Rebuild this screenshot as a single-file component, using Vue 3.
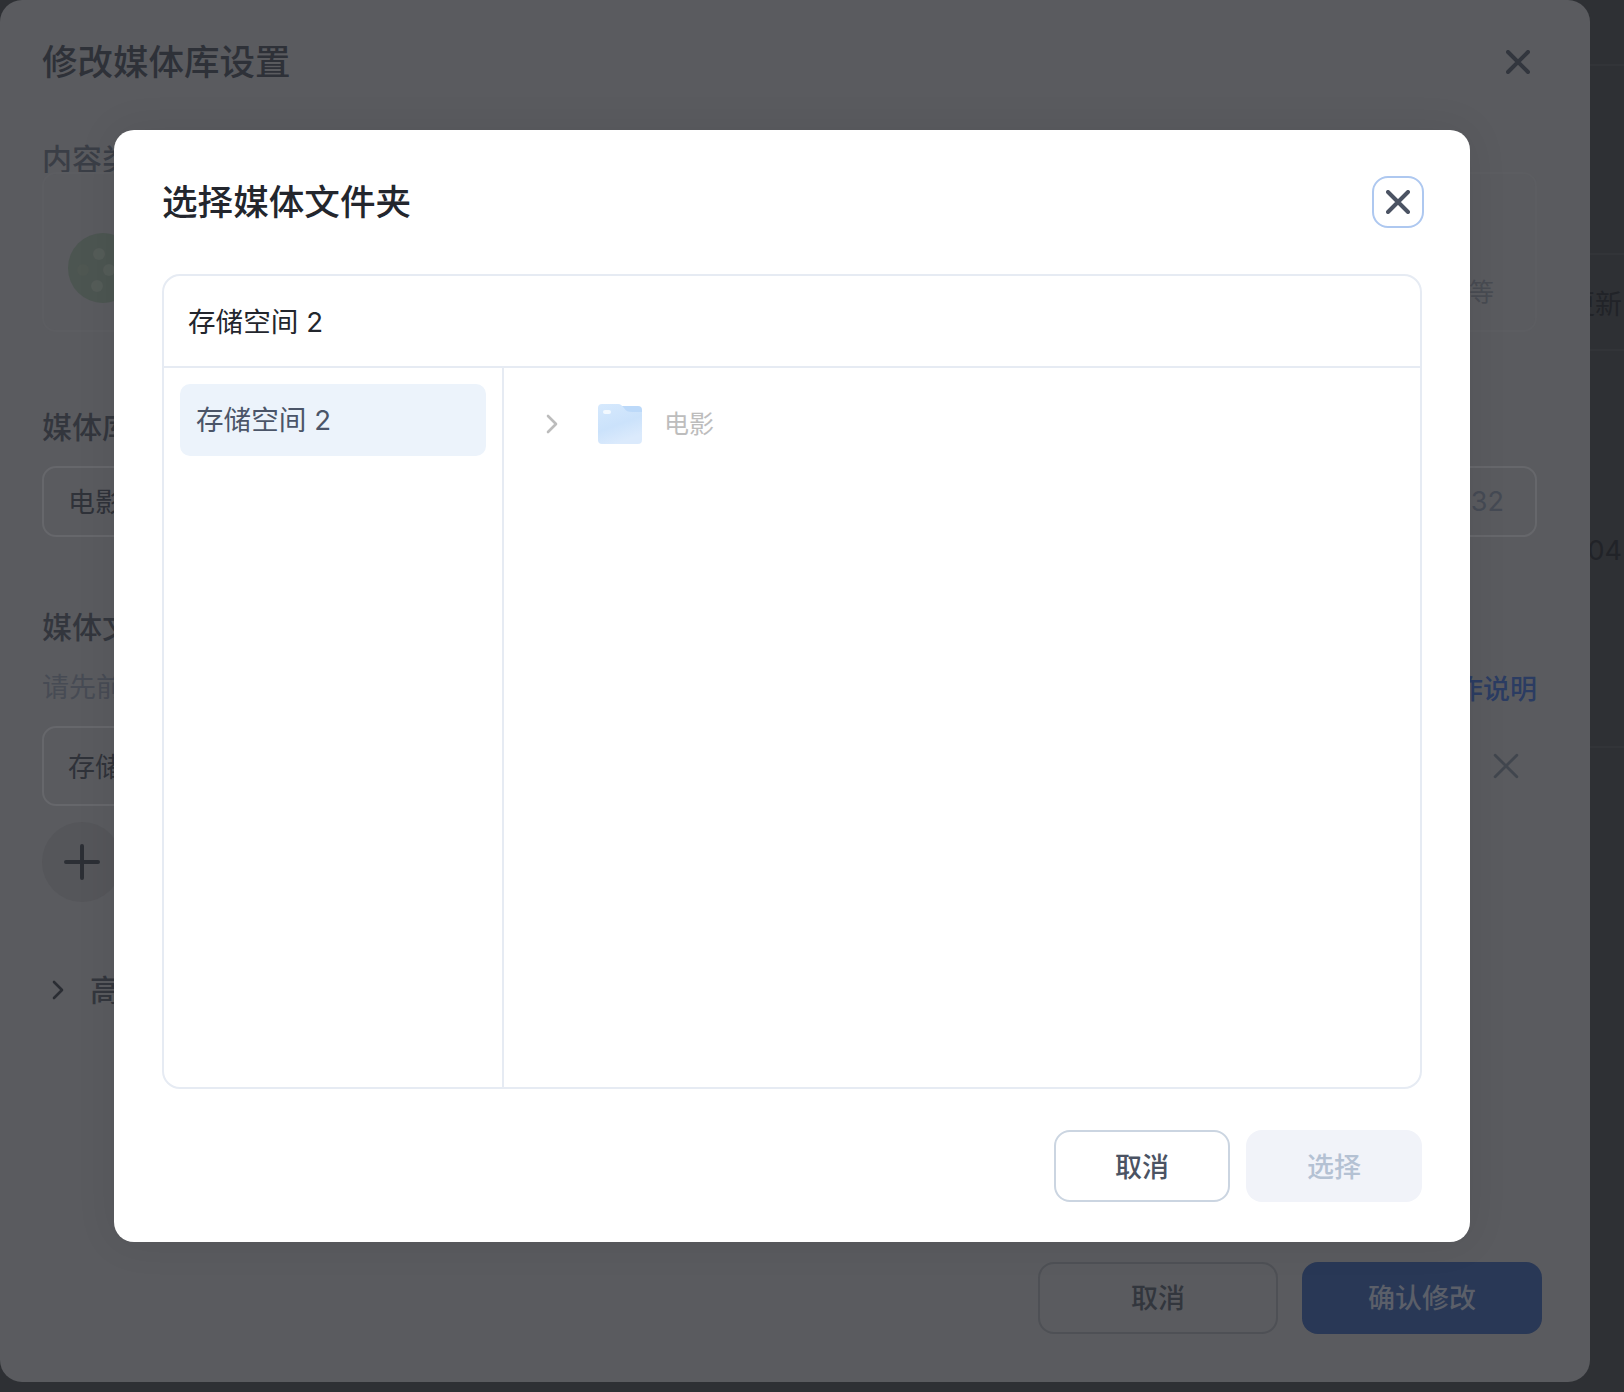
<script setup>
const rows = [
  { id: 'a', text: '', height: 66 },
  { id: 'b', text: '', height: 189 },
  { id: 'c', text: '更新', height: 96 },
  { id: 'd', text: '04', height: 397 }
]
</script>

<template>
  <div class="page">
    <section class="settings">
      <header class="settings-head">
        <h1>修改媒体库设置</h1>
        <svg class="x-icon" viewBox="0 0 24 24"><path d="M2 2 22 22M22 2 2 22" /></svg>
      </header>

      <h2 class="label first">内容类型</h2>
      <div class="types">
        <div class="type-card">
          <svg class="reel" viewBox="0 0 72 72">
            <circle cx="36" cy="36" r="35" fill="#4c5551" />
            <circle cx="32" cy="22" r="6" fill="#545c58" />
            <circle cx="42" cy="38" r="6" fill="#545c58" />
            <circle cx="30" cy="54" r="6" fill="#545c58" />
            <circle cx="16" cy="38" r="6" fill="#4f5752" />
          </svg>
        </div>
        <div class="type-card end"><span class="type-note">等</span></div>
      </div>

      <h2 class="label name-label">媒体库名称</h2>
      <div class="field name-field">
        <span class="nudge">电影</span>
        <span class="count">2 / 32</span>
      </div>

      <h2 class="label folder-label">媒体文件夹</h2>
      <div class="hint-row">
        <span class="hint">请先前往存储空间添加文件夹</span>
        <span class="link">操作说明</span>
      </div>
      <div class="folder-row">
        <div class="field folder-field"><span class="nudge">存储空间 2</span></div>
        <svg class="x-thin" viewBox="0 0 24 24"><path d="M2 2 22 22M22 2 2 22" /></svg>
      </div>
      <button class="add">
        <svg viewBox="0 0 36 36"><path d="M18 2V34M2 18H34" /></svg>
      </button>

      <div class="advanced">
        <svg viewBox="0 0 12 20"><path d="M2 2 10 10 2 18" /></svg>
        <span>高级设置</span>
      </div>

      <footer class="settings-foot">
        <button class="ghost">取消</button>
        <button class="primary">确认修改</button>
      </footer>
    </section>

    <aside class="side">
      <div v-for="row in rows" :key="row.id" class="side-row" :style="{ height: row.height + 'px' }">
        <span>{{ row.text }}</span>
      </div>
    </aside>

    <div class="modal">
      <header class="modal-head">
        <h2>选择媒体文件夹</h2>
        <button class="close">
          <svg viewBox="0 0 24 24"><path d="M2 2 22 22M22 2 2 22" /></svg>
        </button>
      </header>

      <div class="browser">
        <div class="browser-head">存储空间 2</div>
        <div class="browser-body">
          <nav class="drives">
            <div class="drive">存储空间 2</div>
          </nav>
          <div class="tree">
            <div class="tree-row">
              <svg class="chev" viewBox="0 0 12 20"><path d="M2 2 10 10 2 18" /></svg>
              <svg class="folder" viewBox="0 0 44 40">
                <defs>
                  <linearGradient id="fold" x1="0" y1="0" x2="0.4" y2="1">
                    <stop offset="0" stop-color="#d6e9fd" />
                    <stop offset="0.6" stop-color="#cbe2fb" />
                    <stop offset="1" stop-color="#dbeafc" />
                  </linearGradient>
                </defs>
                <path d="M4 2H40a4 4 0 0 1 4 4V20H0V6a4 4 0 0 1 4-4Z" fill="#bcd9f9" />
                <path d="M4 0H20C23 0 24 2 26 4 28 7 30 8 34 8H44V36a4 4 0 0 1-4 4H4a4 4 0 0 1-4-4V4a4 4 0 0 1 4-4Z" fill="url(#fold)" />
                <rect x="5" y="6" width="8" height="4" rx="2" fill="#f3f9ff" />
              </svg>
              <span class="tree-name">电影</span>
            </div>
          </div>
        </div>
      </div>

      <footer class="modal-foot">
        <button class="btn-cancel"><span>取消</span></button>
        <button class="btn-select"><span>选择</span></button>
      </footer>
    </div>
  </div>
</template>

<style>
html, body { margin: 0; background: #2e3034; }
</style>

<style scoped>
.page {
  position: relative;
  display: flex;
  width: 1624px;
  height: 1392px;
  overflow: hidden;
  background: #2e3034;
  font-family: Inter, "Noto Sans CJK SC", sans-serif;
  color: #2f3239;
}
h1, h2 { margin: 0; }
button { font-family: inherit; padding: 0; }

.settings {
  box-sizing: border-box;
  flex: none;
  width: 1590px;
  height: 1382px;
  padding: 0 53px 0 42px;
  background: #5a5b5f;
  border-radius: 22px;
  display: flex;
  flex-direction: column;
}
.settings-head {
  height: 124px;
  flex: none;
  display: flex;
  align-items: center;
  justify-content: space-between;
  padding-right: 7px;
}
.settings-head h1 {
  padding-top: 2px;
  font-size: 35.5px;
  font-weight: 500;
  line-height: 48px;
  color: #2e3138;
}
.x-icon { width: 24px; height: 24px; }
.x-icon path { fill: none; stroke: #32363e; stroke-width: 4; stroke-linecap: round; }

.label {
  font-size: 30px;
  font-weight: 500;
  line-height: 44px;
  color: #33363d;
}
.label.first { color: #3a3e46; margin-top: 13px; }
.name-label { margin-top: 73px; }
.types {
  display: grid;
  grid-template-columns: 1fr 1fr;
  gap: 16px;
  height: 160px;
  margin-top: -9px;
}
.type-card {
  border: 2px solid #5c5d61;
  border-radius: 14px;
  display: flex;
  align-items: flex-end;
  padding: 0 0 26px 23px;
}
.type-card.end { justify-content: flex-end; padding: 0 41px 11px 0; }
.type-note { font-size: 25px; line-height: 54px; color: #484b52; }
.reel { width: 72px; height: 72px; }

.field {
  box-sizing: border-box;
  display: flex;
  align-items: center;
  justify-content: space-between;
  border: 2px solid #66676b;
  border-radius: 14px;
  padding: 0 31px 0 24px;
  font-size: 27px;
  color: #2f3239;
}
.nudge { position: relative; top: -1px; }
.name-field { height: 71px; margin-top: 17px; }
.count { color: #454a54; }
.folder-label { margin-top: 68px; }
.hint-row {
  display: flex;
  justify-content: space-between;
  align-items: center;
  margin-top: 17px;
  line-height: 44px;
  font-size: 27px;
}
.hint { color: #474b54; }
.link { position: relative; top: 2px; color: #2b3c62; font-weight: 500; font-size: 27px; }
.folder-row {
  display: flex;
  align-items: center;
  gap: 24px;
  margin-top: 16px;
}
.folder-field { width: 1427px; height: 80px; flex: none; }
.x-thin { width: 26px; height: 26px; }
.x-thin path { fill: none; stroke: #41464e; stroke-width: 2.6; stroke-linecap: round; }
.add {
  width: 80px;
  height: 80px;
  margin-top: 16px;
  border: 0;
  border-radius: 50%;
  background: #55565a;
  display: flex;
  align-items: center;
  justify-content: center;
}
.add svg { width: 36px; height: 36px; }
.add path { fill: none; stroke: #2c2f35; stroke-width: 4; stroke-linecap: round; }
.advanced {
  display: flex;
  align-items: center;
  gap: 26px;
  margin-top: 66px;
  padding-left: 10px;
  font-size: 30px;
  font-weight: 500;
  line-height: 44px;
  color: #33363d;
}
.advanced svg { width: 12px; height: 20px; }
.advanced path { fill: none; stroke: #2a2d33; stroke-width: 2.6; stroke-linecap: round; stroke-linejoin: round; }
.settings-foot {
  display: flex;
  justify-content: flex-end;
  gap: 24px;
  margin-top: auto;
  margin-bottom: 48px;
  margin-right: -5px;
}
.settings-foot button {
  width: 240px;
  height: 72px;
  padding-bottom: 3px;
  border-radius: 16px;
  font-size: 27px;
  font-weight: 500;
}
.ghost { box-sizing: border-box; background: transparent; border: 2px solid #4e5055; color: #32363d; }
.primary { border: 0; background: #293856; color: #5b5f69; }

.side {
  flex: 1;
  min-width: 0;
  display: flex;
  flex-direction: column;
}
.side-row {
  box-sizing: border-box;
  flex: none;
  display: flex;
  justify-content: flex-end;
  align-items: center;
  overflow: hidden;
  white-space: nowrap;
  padding: 5px 2px 0 0;
  font-size: 27px;
  line-height: 36px;
  color: #212328;
  border-bottom: 2px solid #323438;
}

.modal {
  position: absolute;
  left: 114px;
  top: 130px;
  box-sizing: border-box;
  width: 1356px;
  height: 1112px;
  padding: 46px 48px 40px;
  background: #fff;
  border-radius: 20px;
  box-shadow: 0 0 40px rgba(0, 0, 0, 0.08);
  display: flex;
  flex-direction: column;
}
.modal-head {
  height: 52px;
  display: flex;
  align-items: center;
  justify-content: space-between;
  margin-right: -2px;
}
.modal-head h2 {
  padding-top: 2px;
  font-size: 35.6px;
  font-weight: 500;
  line-height: 50px;
  color: #23262d;
}
.close {
  box-sizing: border-box;
  width: 52px;
  height: 52px;
  border: 2px solid #aec8f0;
  border-radius: 16px;
  background: #fff;
  display: flex;
  align-items: center;
  justify-content: center;
}
.close svg { width: 24px; height: 24px; }
.close path { fill: none; stroke: #4b5363; stroke-width: 4; stroke-linecap: round; }

.browser {
  box-sizing: border-box;
  height: 816px;
  margin-top: 46px;
  border: 2px solid #e6ebf3;
  border-radius: 18px;
  display: flex;
  flex-direction: column;
}
.browser-head {
  box-sizing: border-box;
  height: 92px;
  flex: none;
  display: flex;
  align-items: center;
  padding: 0 0 2px 24px;
  font-size: 27.6px;
  color: #23262d;
  border-bottom: 2px solid #e6ebf3;
}
.browser-body { flex: 1; display: flex; min-height: 0; }
.drives {
  box-sizing: border-box;
  width: 340px;
  flex: none;
  padding: 16px 16px 0 16px;
  border-right: 2px solid #e6ebf3;
}
.drive {
  box-sizing: border-box;
  height: 72px;
  display: flex;
  align-items: center;
  padding: 0 0 4px 16px;
  background: #ecf3fb;
  border-radius: 10px;
  font-size: 27.6px;
  color: #4b5568;
}
.tree { flex: 1; padding: 36px 0 0 42px; }
.tree-row { display: flex; align-items: center; height: 40px; }
.chev { width: 12px; height: 20px; }
.chev path { fill: none; stroke: #bcbcbc; stroke-width: 2.6; stroke-linecap: round; stroke-linejoin: round; }
.folder { width: 44px; height: 40px; margin-left: 40px; }
.tree-name { position: relative; top: -2px; margin-left: 22px; font-size: 25px; color: #bdbdbd; }

.modal-foot {
  display: flex;
  justify-content: flex-end;
  gap: 16px;
  margin-top: 41px;
}
.modal-foot button {
  box-sizing: border-box;
  width: 176px;
  height: 72px;
  padding-bottom: 2px;
  border-radius: 16px;
  font-size: 27px;
  font-weight: 500;
}
.btn-cancel { background: #fff; border: 2px solid #cbd5e1; color: #4b5363; }
.btn-select { background: #f1f3f9; border: 0; color: #b4c1d3; }
</style>
